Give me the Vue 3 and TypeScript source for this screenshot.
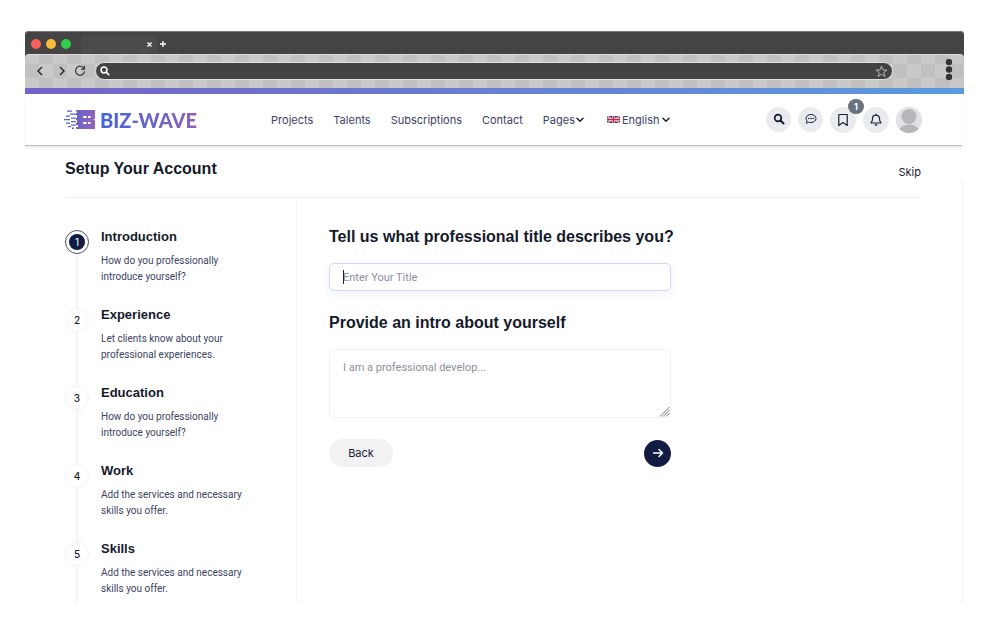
<script setup lang="ts">
import { ref } from 'vue'

interface Step {
  title: string
  text: string
}

const steps: Step[] = [
  { title: 'Introduction', text: 'How do you professionally introduce yourself?' },
  { title: 'Experience', text: 'Let clients know about your professional experiences.' },
  { title: 'Education', text: 'How do you professionally introduce yourself?' },
  { title: 'Work', text: 'Add the services and necessary skills you offer.' },
  { title: 'Skills', text: 'Add the services and necessary skills you offer.' },
]
const links: string[] = ['Projects', 'Talents', 'Subscriptions', 'Contact']
const current = ref(0)
const title = ref('')
const intro = ref('')
const address = ref('')
const language = ref('English')

function next(): void {
  current.value = Math.min(current.value + 1, steps.length - 1)
}
function back(): void {
  current.value = Math.max(current.value - 1, 0)
}
</script>

<template>
  <div class="window">
    <div class="chrome">
      <div class="tabs">
        <span class="dot red"></span>
        <span class="dot yellow"></span>
        <span class="dot green"></span>
        <div class="tab">
          <button class="plain" type="button" aria-label="Close tab">
            <svg width="5" height="5" viewBox="0 0 5 5"><path d="M.5.5l4 4M4.500.5l-4 4" stroke="#fff" stroke-width="1.300" /></svg>
          </button>
        </div>
        <button class="plain" type="button" aria-label="New tab">
          <svg width="6" height="6" viewBox="0 0 6 6"><path d="M3 0v6M0 3h6" stroke="#fff" stroke-width="1.300" /></svg>
        </button>
      </div>
      <div class="toolbar">
        <button class="plain" type="button" aria-label="Back one page">
          <svg width="8" height="10" viewBox="0 0 8 10"><path d="M6 1L2 5l4 4" fill="none" stroke="#222" stroke-width="1.400" /></svg>
        </button>
        <button class="plain forward" type="button" aria-label="Forward one page">
          <svg width="8" height="10" viewBox="0 0 8 10"><path d="M2 1l4 4-4 4" fill="none" stroke="#222" stroke-width="1.400" /></svg>
        </button>
        <button class="plain reload" type="button" aria-label="Reload">
          <svg width="12" height="12" viewBox="0 0 12 12"><path d="M10 3.500A4.500 4.500 0 1 0 10.500 6.500M10.400.8v3.300H7" fill="none" stroke="#333" stroke-width="1.200" /></svg>
        </button>
        <div class="address">
          <svg width="10" height="10" viewBox="0 0 10 10"><circle cx="4" cy="4" r="2.900" fill="none" stroke="#fff" stroke-width="1.500" /><path d="M6 6l3.200 3.200" stroke="#fff" stroke-width="1.700" /></svg>
          <input v-model="address" type="text" aria-label="Address" />
          <button class="plain" type="button" aria-label="Bookmark page">
            <svg width="13" height="13" viewBox="0 0 13 13"><path d="M6.500 1l1.400 3.900 4.100.1-3.200 2.500 1.100 4-3.400-2.300-3.400 2.300 1.100-4L1 5l4.100-.1z" fill="none" stroke="#b4b4b4" stroke-width="1" /></svg>
          </button>
        </div>
        <button class="plain menu" type="button" aria-label="Browser menu">
          <svg width="8" height="24" viewBox="0 0 8 24"><g fill="#343434"><circle cx="4" cy="3" r="3.200" /><circle cx="4" cy="10.500" r="3.200" /><circle cx="4" cy="18" r="3.200" /></g></svg>
        </button>
      </div>
    </div>

    <div class="site">
      <header class="header">
        <a class="logo" href="#" aria-label="Biz-Wave home">
          <svg width="32" height="21" viewBox="0 0 32 21">
            <defs>
              <linearGradient id="mark" gradientUnits="userSpaceOnUse" x1="0" y1="0" x2="32" y2="8">
                <stop offset="0" stop-color="#4a62d8" />
                <stop offset="1" stop-color="#9563b8" />
              </linearGradient>
            </defs>
            <path d="M12 1h19v8.500l-1.500 1 1.500 1V20H12v-2h2v-2h-2v-2h1v-3h-1V9h1V6h-1V4h1V2.500h-1z" fill="url(#mark)" />
            <path d="M3 1.500h5v1.300H3zM6 4.500h6v1.300H6zM2 6.500h4v1.300H2zM7 8.500h5v1.300H7zM0 10h6v1.300H0zM7 12h5v1.300H7zM2 13.500h4v1.300H2zM7 15.500h5v1.300H7zM4 17h3v1.300H4zM8 18.500h2V20H8z" fill="url(#mark)" />
            <path d="M19 7h3.500v2H19zM24 7h2.500v2H24zM19 13h3.500v2H19zM24 13h2.500v2H24z" fill="#fff" />
          </svg>
          <span>BIZ-WAVE</span>
        </a>
        <nav class="nav" aria-label="Main">
          <a v-for="link in links" :key="link" href="#">{{ link }}</a>
          <button class="plain dropdown" type="button">
            Pages
            <svg width="8" height="6" viewBox="0 0 8 6"><path d="M1 1.200l3 3 3-3" fill="none" stroke="#1b2238" stroke-width="1.500" stroke-linecap="round" /></svg>
          </button>
          <label class="language">
            <svg width="13" height="7" viewBox="0 0 13 7">
              <path d="M0 0h13v7H0z" fill="#26337a" />
              <path d="M0 0l13 7M13 0L0 7" stroke="#fff" stroke-width="1.200" />
              <path d="M0 0l13 7M13 0L0 7" stroke="#d0213f" stroke-width=".5" />
              <path d="M6.500 0v7M0 3.500h13" stroke="#fff" stroke-width="2.600" />
              <path d="M6.500 0v7M0 3.500h13" stroke="#d0213f" stroke-width="1.600" />
            </svg>
            <select v-model="language" aria-label="Language">
              <option>English</option>
            </select>
            <svg width="8" height="6" viewBox="0 0 8 6"><path d="M1 1.200l3 3 3-3" fill="none" stroke="#1b2238" stroke-width="1.500" stroke-linecap="round" /></svg>
          </label>
        </nav>
        <div class="actions">
          <button class="round" type="button" aria-label="Search">
            <svg width="12" height="12" viewBox="0 0 12 12"><circle cx="5" cy="5" r="3.300" fill="none" stroke="#141a2e" stroke-width="1.700" /><path d="M7.500 7.500l3 3" stroke="#141a2e" stroke-width="2" stroke-linecap="round" /></svg>
          </button>
          <button class="round" type="button" aria-label="Messages">
            <svg width="12" height="12" viewBox="0 0 12 12"><path d="M6 1.500c2.800 0 5 1.800 5 4s-2.200 4-5 4c-.8 0-1.500-.1-2.200-.4-.7.600-1.600.9-2.800.9.600-.6 1-1.200 1.100-2C1.400 7.300 1 6.400 1 5.500c0-2.200 2.200-4 5-4z" fill="none" stroke="#1b2238" stroke-width="1" /><g fill="#1b2238"><circle cx="3.800" cy="5.500" r=".8" /><circle cx="6" cy="5.500" r=".8" /><circle cx="8.200" cy="5.500" r=".8" /></g></svg>
          </button>
          <button class="round" type="button" aria-label="Saved items, 1">
            <svg width="12" height="14" viewBox="0 0 12 14"><path d="M1.800 1.500h8.400v11L6 9.600l-4.200 2.900z" fill="none" stroke="#1b2238" stroke-width="1.200" stroke-linejoin="round" /></svg>
            <span class="badge">1</span>
          </button>
          <button class="round" type="button" aria-label="Notifications">
            <svg width="12" height="14" viewBox="0 0 12 14"><path d="M6 .8v1.400M6 2.200c-2.200 0-3.500 1.600-3.500 3.600 0 2.300-.5 3-1.500 4.200h10C10 8.800 9.500 8.100 9.500 5.800 9.500 3.800 8.200 2.200 6 2.200z" fill="none" stroke="#1b2238" stroke-width="1.200" stroke-linejoin="round" /><path d="M4.500 11.300a1.500 1.500 0 0 0 3 0z" fill="#1b2238" /></svg>
          </button>
          <button class="round" type="button" aria-label="Profile">
            <svg width="26" height="26" viewBox="0 0 26 26"><defs><clipPath id="face"><circle cx="13" cy="13" r="13" /></clipPath></defs><g clip-path="url(#face)"><path d="M0 0h26v26H0z" fill="#e1e2e5" /><circle cx="13" cy="9.500" r="7.500" fill="#b5b7bb" /><ellipse cx="13" cy="24" rx="10" ry="6.500" fill="#b5b7bb" /></g></svg>
          </button>
        </div>
      </header>

      <main class="content">
        <div class="heading">
          <h1>Setup Your Account</h1>
          <a href="#">Skip</a>
        </div>
        <div class="columns">
          <ol class="steps">
            <li v-for="(step, index) in steps" :key="step.title" :class="{ active: index === current }">
              <div class="rail"><span class="number"><b>{{ index + 1 }}</b></span></div>
              <div>
                <h2>{{ step.title }}</h2>
                <p>{{ step.text }}</p>
              </div>
            </li>
          </ol>
          <form class="form" @submit.prevent="next">
            <label for="title">Tell us what professional title describes you?</label>
            <div class="field">
              <input id="title" v-model="title" type="text" placeholder="Enter Your Title" />
              <span v-if="!title" class="caret"></span>
            </div>
            <label for="intro">Provide an intro about yourself</label>
            <div class="area">
              <textarea id="intro" v-model="intro" placeholder="I am a professional develop..."></textarea>
              <svg class="grip" width="11" height="11" viewBox="0 0 11 11"><path d="M1 10.500L10.500 1M4 10.500L10.500 4M7 10.500L10.500 7" stroke="#777" stroke-width="1" /></svg>
            </div>
            <div class="buttons">
              <button class="back" type="button" @click="back">Back</button>
              <button class="next" type="submit" aria-label="Next">
                <svg width="12" height="10" viewBox="0 0 12 10"><path d="M1.500 5h9M7 1.500L10.500 5 7 8.500" fill="none" stroke="#fff" stroke-width="1.500" stroke-linecap="round" stroke-linejoin="round" /></svg>
              </button>
            </div>
          </form>
        </div>
      </main>
    </div>
  </div>
</template>

<style>
body {
  margin: 0;
  background: #fff;
}
</style>

<style scoped>
.window {
  margin: 31px 36px 37px 25px;
  color: #1b2238;
  font: 11px/16px Inter, "Open Sans", sans-serif;
}
.window * {
  box-sizing: border-box;
}
a {
  color: inherit;
  text-decoration: none;
}
button,
input,
select,
textarea {
  font: inherit;
  color: inherit;
}
svg {
  display: block;
  flex: none;
}
.plain {
  padding: 0;
  border: 0;
  background: none;
}
.chrome {
  border-radius: 4px 4px 0 0;
  background: #444;
}
.tabs {
  display: flex;
  align-items: center;
  gap: 5px;
  height: 23px;
  padding: 2px 6px 0;
  border-top: 1px solid #777;
  border-radius: 4px 4px 0 0;
}
.dot {
  width: 10px;
  height: 10px;
  border-radius: 50%;
}
.red {
  background: #fa615c;
}
.yellow {
  background: #f9bd3d;
}
.green {
  background: #33cb4b;
}
.tab {
  display: flex;
  align-items: center;
  justify-content: flex-end;
  width: 76px;
  height: 18px;
  margin-left: 5px;
  padding-right: 5px;
  border-radius: 5px 5px 0 0;
  background: #4b4b4b;
}
.tab + .plain {
  margin-left: -2px;
}
.toolbar {
  display: flex;
  align-items: center;
  height: 34px;
  padding: 0 11px 1px;
  border-top: 1px solid #ddd;
  border-radius: 4px 4px 0 0;
  background: repeating-conic-gradient(#c9c9c9 0 25%, #c0c0c0 0 50%) 0 9px / 28px 28px;
}
.forward {
  margin-left: 14px;
}
.reload {
  margin: 0 9px 0 8px;
}
.address {
  display: flex;
  flex: 1;
  align-items: center;
  height: 18px;
  padding: 0 4px;
  border: 1px solid #e0e0e0;
  border-radius: 9px;
  background: #434343;
}
.address input {
  flex: 1;
  min-width: 0;
  height: 14px;
  border: 0;
  outline: 0;
  background: none;
  color: #fff;
}
.menu {
  margin-left: 52px;
}
.site {
  border-top: 6px solid;
  border-image: linear-gradient(90deg, #7562c8, #5a9be0) 1;
}
.header {
  display: flex;
  align-items: center;
  height: 52px;
  margin-right: 2px;
  padding: 0 40px 0 39px;
  border-bottom: 1px solid #bcbcbc;
  box-shadow: 0 2px 2px #eee;
}
.logo {
  display: flex;
  align-items: center;
  gap: 4px;
}
.logo span {
  background: linear-gradient(90deg, #4165dd, #9061b8);
  background-clip: text;
  color: transparent;
  font: 900 20px/24px Lato, sans-serif;
}
.nav {
  display: flex;
  gap: 20px;
  margin-left: 74px;
  color: #3b4463;
}
.dropdown,
.language {
  display: flex;
  align-items: center;
  gap: 1px;
}
.language {
  gap: 2px;
  margin-left: 3px;
}
.language select {
  padding: 0;
  border: 0;
  background: none;
  appearance: none;
}
.actions {
  display: flex;
  gap: 7px;
  margin-left: auto;
}
.round {
  position: relative;
  display: grid;
  place-items: center;
  width: 26px;
  height: 26px;
  padding: 0;
  border: 0;
  border-radius: 50%;
  background: #eaebef;
}
.round:nth-child(-n + 2) {
  width: 25px;
  height: 25px;
}
.badge {
  position: absolute;
  top: -8px;
  right: -8px;
  width: 16px;
  height: 15px;
  border-radius: 8px;
  background: #69747e;
  color: #fff;
  font-size: 9px;
  font-weight: 700;
  line-height: 15px;
}
.content {
  margin-right: 1px;
  padding: 0 42px 0 40px;
  background: linear-gradient(#f1f1f1, #f1f1f1) right 34px / 1px 100% no-repeat;
}
.heading {
  display: flex;
  align-items: center;
  justify-content: space-between;
  height: 52px;
  border-bottom: 1px solid #f0f0f1;
}
h1,
h2,
.form label {
  margin: 0;
  color: #141a2b;
  font-family: "Liberation Sans", Arial, sans-serif;
  font-weight: 700;
}
h1 {
  padding-bottom: 6px;
  font-size: 16px;
  line-height: 20px;
}
.columns {
  display: flex;
}
.steps {
  flex: none;
  width: 232px;
  margin: 0;
  padding: 28px 40px 0 0;
  border-right: 1px solid #f5f5f6;
  list-style: none;
}
.steps li {
  display: flex;
  gap: 12px;
}
h2 {
  font-size: 13px;
  line-height: 22px;
}
.steps p {
  margin: 5px 0 19px;
  color: #3b4463;
  font-family: Roboto, sans-serif;
  font-size: 10px;
}
.steps li:last-child p {
  margin-bottom: 6px;
}
.rail {
  flex: none;
  width: 24px;
  padding-top: 4px;
  background: linear-gradient(#f3f3f4, #f3f3f4) center 0 / 2px 100% no-repeat;
}
.steps li:first-child .rail {
  background-position: center 16px;
}
.number {
  display: grid;
  place-items: center;
  width: 24px;
  height: 24px;
  border: 1px solid #f3f3f4;
  border-radius: 50%;
  background: #fff;
}
.number b {
  width: 16px;
  border-radius: 50%;
  font-size: 10px;
  font-weight: 500;
  text-align: center;
}
.active .number {
  border-color: #4a5070;
}
.active .number b {
  background: #121b42;
  color: #fff;
  font-weight: 400;
}
.form {
  display: flex;
  flex-direction: column;
  width: 374px;
  padding: 28px 0 0 32px;
}
.form label {
  font-size: 16px;
  line-height: 22px;
  white-space: nowrap;
}
.field {
  position: relative;
  margin: 15px 0 21px;
}
.field input,
textarea {
  display: block;
  width: 100%;
  padding: 0 13px;
  border: 1px solid #f0f0f2;
  border-radius: 5px;
  outline: 0;
  background: #fff;
  font-family: Roboto, sans-serif;
}
.field input {
  height: 28px;
  border-color: #cfd6fb;
  box-shadow: 0 3px 12px #f0f1fe;
}
.area {
  position: relative;
  margin-top: 15px;
}
textarea {
  height: 69px;
  padding-top: 10px;
  resize: vertical;
}
textarea::-webkit-resizer {
  background: transparent;
}
.grip {
  position: absolute;
  right: 1px;
  bottom: 1px;
  pointer-events: none;
}
input::placeholder,
textarea::placeholder {
  color: #8b90a1;
  opacity: 1;
}
.caret {
  position: absolute;
  top: 7px;
  left: 14px;
  width: 1px;
  height: 14px;
  background: #1b2238;
}
.buttons {
  display: flex;
  align-items: center;
  justify-content: space-between;
  margin-top: 21px;
}
.back {
  width: 64px;
  height: 28px;
  padding: 0;
  border: 0;
  border-radius: 14px;
  background: #f2f2f3;
}
.next {
  display: grid;
  place-items: center;
  width: 27px;
  height: 27px;
  padding: 0;
  border: 0;
  border-radius: 50%;
  background: #121b42;
}
</style>
